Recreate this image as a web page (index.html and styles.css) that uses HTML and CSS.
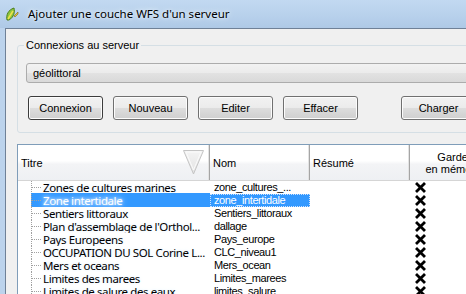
FILE: index.html
```html
<!DOCTYPE html>
<html lang="fr">

<head>
  <meta charset="UTF-8">
  <title>Ajouter une couche WFS d'un serveur</title>
  <link rel="stylesheet" href="styles.css">
</head>

<body>
  <div class="window">
    <div class="titlebar">
      <svg class="app-icon" width="14" height="15" viewBox="0 0 14 15">
        <path d="M2 13 C1 8 3 3 9 1 C10 5 9 10 4 13 Z" fill="#8cc63e" stroke="#4e7d1c" stroke-width="1"/>
        <path d="M3 12 L8 4" stroke="#f2e14a" stroke-width="1.5"/>
        <path d="M9 9 L13 5 L13 7 L10 10 Z" fill="#e8c53a" stroke="#7a6418" stroke-width="0.6"/>
      </svg>
      <span class="title">Ajouter une couche WFS d'un serveur</span>
    </div>

    <div class="client">
      <fieldset class="group">
        <legend>Connexions au serveur</legend>
        <div class="combo">géolittoral</div>
        <div class="buttons">
          <button class="btn default">Connexion</button>
          <button class="btn">Nouveau</button>
          <button class="btn">Editer</button>
          <button class="btn">Effacer</button>
          <span class="spacer"></span>
          <button class="btn">Charger</button>
        </div>
      </fieldset>

      <div class="table">
        <div class="thead">
          <div class="th th-title">
            <span>Titre</span>
            <svg class="sort" width="21" height="25" viewBox="0 0 21 25">
              <defs>
                <linearGradient id="sortfill" x1="0" y1="0" x2="0" y2="1">
                  <stop offset="0" stop-color="#f4f4f4"/>
                  <stop offset="1" stop-color="#e2e2e2"/>
                </linearGradient>
              </defs>
              <polygon points="0.5,0.5 20.5,0.5 10.5,24" fill="url(#sortfill)" stroke="#c4c4c4" stroke-width="1"/>
              <polygon points="3,2 18,2 10.5,20" fill="none" stroke="#fbfbfb" stroke-width="1"/>
            </svg>
          </div>
          <div class="th">Nom</div>
          <div class="th">Résumé</div>
          <div class="th th-center">Garder<br>en mémoire</div>
        </div>

        <div class="rows">
          <div class="row">
            <div class="cell title"><span class="branch"></span>Zones de cultures marines</div>
            <div class="cell">zone_cultures_...</div>
            <div class="cell"></div>
            <div class="cell check"><svg width="11" height="11" viewBox="0 0 11 11"><path d="M2 2 L9 9 M9 2 L2 9" stroke="#000" stroke-width="2.8" stroke-linecap="square"/></svg></div>
          </div>
          <div class="row selected">
            <div class="cell title"><span class="branch"></span>Zone intertidale</div>
            <div class="cell focus">zone_intertidale</div>
            <div class="cell"></div>
            <div class="cell check"><svg width="11" height="11" viewBox="0 0 11 11"><path d="M2 2 L9 9 M9 2 L2 9" stroke="#000" stroke-width="2.8" stroke-linecap="square"/></svg></div>
          </div>
          <div class="row">
            <div class="cell title"><span class="branch"></span>Sentiers littoraux</div>
            <div class="cell">Sentiers_littoraux</div>
            <div class="cell"></div>
            <div class="cell check"><svg width="11" height="11" viewBox="0 0 11 11"><path d="M2 2 L9 9 M9 2 L2 9" stroke="#000" stroke-width="2.8" stroke-linecap="square"/></svg></div>
          </div>
          <div class="row">
            <div class="cell title"><span class="branch"></span>Plan d'assemblage de l'Orthol...</div>
            <div class="cell">dallage</div>
            <div class="cell"></div>
            <div class="cell check"><svg width="11" height="11" viewBox="0 0 11 11"><path d="M2 2 L9 9 M9 2 L2 9" stroke="#000" stroke-width="2.8" stroke-linecap="square"/></svg></div>
          </div>
          <div class="row">
            <div class="cell title"><span class="branch"></span>Pays Europeens</div>
            <div class="cell">Pays_europe</div>
            <div class="cell"></div>
            <div class="cell check"><svg width="11" height="11" viewBox="0 0 11 11"><path d="M2 2 L9 9 M9 2 L2 9" stroke="#000" stroke-width="2.8" stroke-linecap="square"/></svg></div>
          </div>
          <div class="row">
            <div class="cell title"><span class="branch"></span>OCCUPATION DU SOL Corine L...</div>
            <div class="cell">CLC_niveau1</div>
            <div class="cell"></div>
            <div class="cell check"><svg width="11" height="11" viewBox="0 0 11 11"><path d="M2 2 L9 9 M9 2 L2 9" stroke="#000" stroke-width="2.8" stroke-linecap="square"/></svg></div>
          </div>
          <div class="row">
            <div class="cell title"><span class="branch"></span>Mers et oceans</div>
            <div class="cell">Mers_ocean</div>
            <div class="cell"></div>
            <div class="cell check"><svg width="11" height="11" viewBox="0 0 11 11"><path d="M2 2 L9 9 M9 2 L2 9" stroke="#000" stroke-width="2.8" stroke-linecap="square"/></svg></div>
          </div>
          <div class="row">
            <div class="cell title"><span class="branch"></span>Limites des marees</div>
            <div class="cell">Limites_marees</div>
            <div class="cell"></div>
            <div class="cell check"><svg width="11" height="11" viewBox="0 0 11 11"><path d="M2 2 L9 9 M9 2 L2 9" stroke="#000" stroke-width="2.8" stroke-linecap="square"/></svg></div>
          </div>
          <div class="row">
            <div class="cell title"><span class="branch"></span>Limites de salure des eaux</div>
            <div class="cell">limites_salure</div>
            <div class="cell"></div>
            <div class="cell check"><svg width="11" height="11" viewBox="0 0 11 11"><path d="M2 2 L9 9 M9 2 L2 9" stroke="#000" stroke-width="2.8" stroke-linecap="square"/></svg></div>
          </div>
        </div>
      </div>
    </div>
  </div>
</body>

</html>
```

FILE: styles.css
```css
body {
  margin: 0;
  width: 466px;
  height: 294px;
  overflow: hidden;
  font-family: 'Liberation Sans', Arial, sans-serif;
  font-size: 11px;
  color: #000;
}

.window {
  width: 466px;
  height: 294px;
  display: flex;
  flex-direction: column;
  background: linear-gradient(90deg, #bcd3ec 0%, #c9dcf0 100%);
}

.titlebar {
  height: 28px;
  flex: none;
  display: flex;
  align-items: center;
  padding-left: 5px;
  background: linear-gradient(180deg, #c2d9f1 0%, #b7d0eb 60%, #aec9e6 100%);
}

.app-icon {
  margin-right: 9px;
  margin-top: 1px;
}

.title {
  font-family: 'Noto Sans', sans-serif;
  font-size: 11.5px;
  margin-top: -1px;
  text-shadow: 0 0 6px #e8f2fc, 0 0 3px #e8f2fc;
}

.client {
  flex: 1;
  margin-left: 5px;
  border-left: 1px solid #6f8197;
  border-top: 1px solid #6f8197;
  background: #f0f0f0;
  overflow: hidden;
}

.group {
  width: 520px;
  margin: 10px 0 0 11px;
  padding: 12px 8px 12px 8px;
  border: 1px solid #d5dfe5;
  border-radius: 3px;
  box-sizing: border-box;
}

.group legend {
  margin-left: -2px;
  padding: 0 2px;
}

.combo {
  height: 20px;
  box-sizing: border-box;
  width: 480px;
  border: 1px solid #acacac;
  border-radius: 3px;
  background: linear-gradient(180deg, #f2f2f2 0%, #ebebeb 50%, #e2e2e2 51%, #d9d9d9 100%);
  padding-left: 6px;
  line-height: 18px;
}

.buttons {
  display: flex;
  gap: 10px;
  margin-top: 13px;
  padding-left: 2px;
  width: 448px;
}

.spacer {
  flex: 1;
}

.btn {
  width: 75px;
  height: 24px;
  flex: none;
  font-family: inherit;
  font-size: 11px;
  border: 1px solid #707070;
  border-radius: 3px;
  background: linear-gradient(180deg, #f2f2f2 0%, #ebebeb 50%, #dddddd 51%, #cfcfcf 100%);
  box-shadow: inset 0 0 0 1px #fcfcfc;
  padding: 0;
  color: #000;
}

.btn.default {
  border-color: #3c3c3c;
}

.table {
  width: 520px;
  margin: 11px 0 0 11px;
  border: 1px solid #7f9db9;
  background: #fff;
}

.thead {
  display: grid;
  grid-template-columns: 192px 100px 100px 90px;
  height: 35px;
  border-bottom: 1px solid #d5d5d5;
  background: linear-gradient(180deg, #ffffff 0%, #ffffff 45%, #f3f4f6 55%, #eef0f3 100%);
}

.th {
  display: flex;
  align-items: center;
  padding-left: 3px;
  border-right: 1px solid #a5a5a5;
  box-shadow: inset -1px 0 0 #e3e3e3;
}

.th-title {
  justify-content: space-between;
  padding-right: 5px;
}

.sort {
  align-self: flex-start;
  margin-top: 5px;
}

.th-center {
  justify-content: center;
  text-align: center;
  padding: 0;
  line-height: 12px;
}

.row {
  display: grid;
  grid-template-columns: 13px 179px 100px 100px 90px;
  height: 13px;
  line-height: 13px;
  letter-spacing: -0.4px;
}

.cell {
  white-space: nowrap;
  overflow: hidden;
}

.row .cell:first-child {
  grid-column: 2;
}

.row::before {
  content: "";
  grid-column: 1;
  grid-row: 1;
}

.cell.title {
  display: flex;
  align-items: center;
}

.branch {
  width: 9px;
  height: 13px;
  margin-right: 2px;
  flex: none;
  border-left: 1px dotted #a0a0a0;
  background: linear-gradient(90deg, #a0a0a0 50%, transparent 50%) 0 6px / 2px 1px repeat-x;
}

.cell:nth-child(2) {
  padding-left: 4px;
}

.check {
  padding-left: 5px;
  display: flex;
  align-items: center;
}

.selected .title,
.selected .focus {
  background: #3399ff;
  color: #fff;
}

.selected .focus {
  outline: 1px dotted #cfe3ff;
  outline-offset: -1px;
}
```
